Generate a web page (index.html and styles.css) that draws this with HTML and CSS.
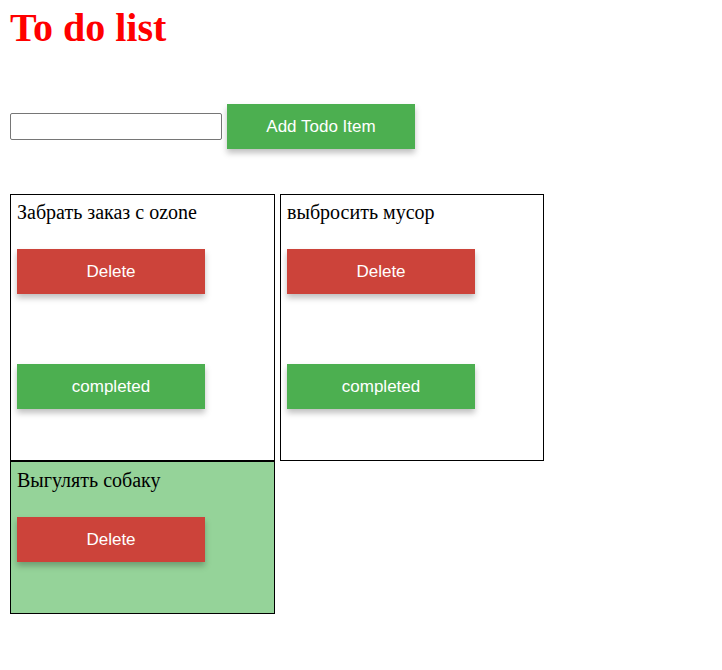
FILE: index.html
```html
<!DOCTYPE html>
<html>
<head>
<meta charset="utf-8">
<link rel="stylesheet" href="styles.css">
</head>
<body>
<div class="app">
  <h1 class="title">To do list</h1>
  <div class="add-row">
    <input class="todo-input" type="text">
    <button class="btn btn-green">Add Todo Item</button>
  </div>
  <div class="cards">
    <div class="card">
      <div class="card-text">Забрать заказ с ozone</div>
      <button class="btn btn-red">Delete</button>
      <button class="btn btn-green btn-complete">completed</button>
    </div>
    <div class="card card-narrow">
      <div class="card-text">выбросить мусор</div>
      <button class="btn btn-red">Delete</button>
      <button class="btn btn-green btn-complete">completed</button>
    </div>
    <div class="card card-done">
      <div class="card-text card-text-done">Выгулять собаку</div>
      <button class="btn btn-red">Delete</button>
    </div>
  </div>
</div>
</body>
</html>
```
FILE: styles.css
```css
html, body {
  margin: 0;
  padding: 0;
  background: #ffffff;
}
.app {
  padding: 5px 10px;
  font-family: "Liberation Serif", "Times New Roman", serif;
}
.title {
  margin: 0;
  font-size: 40px;
  font-weight: bold;
  color: #ff0000;
  line-height: 46px;
}
.add-row {
  display: flex;
  align-items: center;
  gap: 5px;
  margin-top: 53px;
}
.todo-input {
  box-sizing: border-box;
  width: 212px;
  height: 27px;
  margin: 0;
  border: 1px solid #767676;
  border-radius: 2px;
  font-size: 16px;
  padding: 1px 2px;
}
.btn {
  display: block;
  box-sizing: border-box;
  width: 188px;
  height: 45px;
  border: none;
  margin: 0;
  color: #ffffff;
  font-family: "Liberation Sans", Arial, sans-serif;
  font-size: 17px;
  box-shadow: 0 4px 6px rgba(0, 0, 0, 0.25);
  cursor: pointer;
}
.btn-green {
  background: #4caf50;
}
.btn-red {
  background: #cc433a;
}
.cards {
  display: flex;
  flex-wrap: wrap;
  align-items: flex-start;
  column-gap: 5px;
  width: 540px;
  margin-top: 45px;
}
.card {
  box-sizing: border-box;
  width: 265px;
  border: 1px solid #000000;
  padding: 6px 6px 51px 6px;
}
.card-narrow {
  width: 264px;
}
.card-done {
  background: #95d399;
}
.card-text {
  font-size: 20px;
  line-height: 23px;
  color: #000000;
  margin-bottom: 25px;
}
.card-text-done {
  margin-top: 1px;
}
.btn-complete {
  margin-top: 70px;
}
```
